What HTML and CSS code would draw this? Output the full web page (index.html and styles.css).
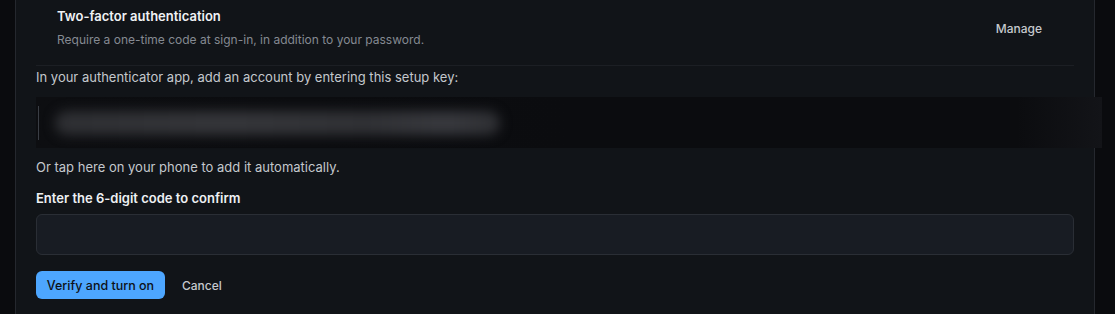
FILE: index.html
```html
<!DOCTYPE html>
<html lang="en">
<head>
    <meta charset="UTF-8">
    <title>Two-factor authentication</title>
    <link rel="stylesheet" href="styles.css">
</head>
<body>
    <div class="panel">
        <div class="tfa-header">
            <div class="tfa-info">
                <h3 class="tfa-title">Two-factor authentication</h3>
                <p class="tfa-desc">Require a one-time code at sign-in, in addition to your password.</p>
            </div>
            <button class="link-btn manage">Manage</button>
        </div>

        <div class="setup">
            <p class="setup-text">In your authenticator app, add an account by entering this setup key:</p>
            <div class="key-box">
                <span class="key-bar"></span>
                <div class="key-blur"></div>
            </div>
            <p class="setup-text tap">Or tap here on your phone to add it automatically.</p>

            <label class="code-label" for="code">Enter the 6-digit code to confirm</label>
            <input class="code-input" id="code" type="text" autocomplete="off">

            <div class="actions">
                <button class="primary-btn">Verify and turn on</button>
                <button class="link-btn cancel">Cancel</button>
            </div>
        </div>
    </div>
</body>
</html>
```

FILE: styles.css
```css
* {
    margin: 0;
    padding: 0;
    box-sizing: border-box;
    font-family: 'Inter', 'Liberation Sans', sans-serif;
}

body {
    background: #0a0b0e;
    height: 314px;
    overflow: hidden;
    padding-left: 15px;
}

.panel {
    width: 1080px;
    height: 314px;
    background: #111418;
    border-left: 1px solid #25282e;
    border-right: 1px solid #25282e;
    padding: 0 20px;
}

.tfa-header {
    display: flex;
    justify-content: space-between;
    border-bottom: 1px solid #1c1f24;
    padding: 6px 32px 0 21px;
    height: 66px;
}

.tfa-title {
    color: #f0f2f5;
    font-size: 13px;
    font-weight: 600;
    line-height: 20px;
}

.tfa-desc {
    color: #858a92;
    font-size: 12px;
    line-height: 18px;
    margin-top: 5px;
}

.link-btn {
    background: none;
    border: none;
    color: #c6c9ce;
    font-size: 12px;
    font-weight: 500;
    cursor: pointer;
}

.manage {
    height: 20px;
    margin-top: 12px;
}

.setup {
    padding-top: 1px;
}

.setup-text {
    color: #c4c8cd;
    font-size: 13px;
    line-height: 20px;
}

.key-box {
    display: flex;
    align-items: center;
    height: 51px;
    margin: 10px -28px 0 0;
    background: linear-gradient(90deg, #0d0e11 0%, #0b0c0f 50%, #0b0c0f 92%, #131418 100%);
    padding-left: 2px;
}

.key-bar {
    width: 1px;
    height: 34px;
    background: #3a3e45;
}

.key-blur {
    width: 445px;
    height: 24px;
    margin-left: 16px;
    border-radius: 12px;
    background: linear-gradient(90deg, #2e2f33, #35363a 40%, #303135 70%, #38393e 88%, #2e2f33);
    filter: blur(6px);
}

.tap {
    margin-top: 9px;
}

.code-label {
    display: block;
    color: #eef0f3;
    font-size: 13px;
    font-weight: 600;
    line-height: 20px;
    margin-top: 11px;
}

.code-input {
    display: block;
    width: 100%;
    height: 41px;
    margin-top: 6px;
    background: #181c23;
    border: 1px solid #2a2e35;
    border-radius: 6px;
    color: #e6edf3;
    font-size: 14px;
    padding: 0 12px;
    outline: none;
}

.actions {
    display: flex;
    align-items: center;
    gap: 8px;
    margin-top: 16px;
}

.primary-btn {
    background: #4da6ff;
    color: #0d1117;
    border: none;
    border-radius: 6px;
    width: 129px;
    height: 28px;
    font-size: 12.5px;
    font-weight: 500;
    cursor: pointer;
}

.cancel {
    padding: 0 9px;
    height: 28px;
}
```
